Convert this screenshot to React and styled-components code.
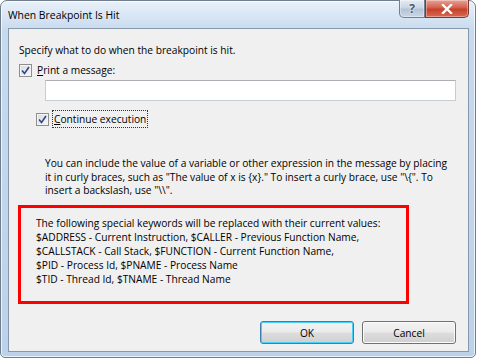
import React from 'react';
import styled, { createGlobalStyle } from 'styled-components';

const GlobalStyle = createGlobalStyle`
  body {
    margin: 0;
    background: #ffffff;
    font-family: "Open Sans", "Noto Sans", sans-serif;
  }
`;

const uiFont = `"Open Sans", "Noto Sans", sans-serif`;

const Window = styled.div`
  position: relative;
  width: 476px;
  height: 358px;
  box-sizing: border-box;
  border: 1px solid #6f7d8c;
  border-radius: 7px 7px 5px 5px;
  background: linear-gradient(180deg, #e9f1fa 0px, #c7daee 30px, #bcd2ea 100%);
  padding: 0 6px 5px 7px;
  display: flex;
  flex-direction: column;
  box-shadow: inset 0 0 0 1px rgba(255, 255, 255, 0.7);
`;

const TitleBar = styled.div`
  height: 27px;
  display: flex;
  align-items: flex-start;
`;

const Title = styled.div`
  font-family: ${uiFont};
  font-size: 10.4px;
  color: #000;
  margin-top: 7px;
`;

const CaptionButtons = styled.div`
  margin-left: auto;
  margin-top: -1px;
  display: flex;
`;

const CaptionButton = styled.div`
  width: ${p => p.$w}px;
  height: 18px;
  box-sizing: border-box;
  border: 1px solid ${p => (p.$close ? '#7a3a33' : '#71808f')};
  border-top: none;
  border-radius: ${p => (p.$close ? '0 0 5px 0' : '0 0 0 5px')};
  background: ${p =>
    p.$close
      ? 'linear-gradient(180deg, #e8a396 0%, #d4604e 45%, #c7402c 55%, #d86a4f 100%)'
      : 'linear-gradient(180deg, #e4ecf4 0%, #c9d6e4 45%, #b4c4d6 55%, #c8d8e8 100%)'};
  display: flex;
  align-items: center;
  justify-content: center;
  font-family: ${uiFont};
  font-weight: bold;
  box-shadow: inset 0 0 0 1px rgba(255, 255, 255, 0.35);
`;

const HelpMark = styled.span`
  color: #4d5a68;
  font-size: 12px;
  text-shadow: 0 0 2px #fff;
`;

const Client = styled.div`
  flex: 1;
  border: 1px solid #8798ab;
  background: #f0f0f0;
  padding: 14px 12px 0 10px;
  display: flex;
  flex-direction: column;
  font-family: ${uiFont};
  font-size: 10.2px;
  color: #000;
  line-height: 14px;
  white-space: nowrap;
`;

const Text = styled.div`
  margin-left: ${p => p.$indent || 0}px;
`;

const CheckRow = styled.label`
  display: flex;
  align-items: center;
  margin-top: ${p => p.$top}px;
  margin-left: ${p => p.$indent || 0}px;
  gap: 3px;
`;

const Box = styled.span`
  width: 13px;
  height: 13px;
  box-sizing: border-box;
  border: 1px solid #8e8f8f;
  background: linear-gradient(135deg, #dcdcdc 0%, #f6f6f6 100%);
  display: flex;
  align-items: center;
  justify-content: center;
  box-shadow: inset 0 0 0 1px #f4f4f4;
`;

const Label = styled.span`
  padding: 1px 1px;
  border: 1px dotted ${p => (p.$focus ? '#333' : 'transparent')};
  u {
    text-decoration: underline;
  }
`;

const Input = styled.div`
  height: 21px;
  box-sizing: border-box;
  margin: 1px 0 0 26px;
  border: 1px solid #c6cdd5;
  border-top-color: #abadb3;
  background: #fff;
`;

const Help = styled.div`
  margin: 29px 0 0 26px;
  line-height: 13.5px;
`;

const Highlight = styled.div`
  margin: 7px 0 0 -1px;
  width: 391px;
  height: 99px;
  box-sizing: border-box;
  border: 3px solid #ff0000;
  padding: 8px 0 0 15px;
`;

const Footer = styled.div`
  margin-top: auto;
  margin-bottom: 7px;
  display: flex;
  justify-content: flex-end;
  gap: 8px;
`;

const Button = styled.div`
  width: 94px;
  height: 23px;
  box-sizing: border-box;
  border: 1px solid ${p => (p.$default ? '#3c7fb1' : '#707070')};
  border-radius: 3px;
  background: linear-gradient(180deg, #f2f2f2 0%, #ebebeb 48%, #dddddd 52%, #cfcfcf 100%);
  box-shadow: inset 0 0 0 1px ${p => (p.$default ? '#48d0f8' : '#fbfbfb')};
  display: flex;
  align-items: center;
  justify-content: center;
  color: #000;
`;

function Check() {
  return (
    <Box>
      <svg width="9" height="9" viewBox="0 0 9 9">
        <path d="M1 4.5 L3.5 7.5 L8 1" fill="none" stroke="#2a4a8a" strokeWidth="1.6" />
      </svg>
    </Box>
  );
}

export default function App() {
  return (
    <>
      <GlobalStyle />
      <Window>
        <TitleBar>
          <Title>When Breakpoint Is Hit</Title>
          <CaptionButtons>
            <CaptionButton $w={26}>
              <HelpMark>?</HelpMark>
            </CaptionButton>
            <CaptionButton $w={44} $close>
              <svg width="12" height="10" viewBox="0 0 12 10">
                <path d="M2 1 L10 9 M10 1 L2 9" stroke="#fff" strokeWidth="2.4" strokeLinecap="square" />
              </svg>
            </CaptionButton>
          </CaptionButtons>
        </TitleBar>
        <Client>
          <Text>Specify what to do when the breakpoint is hit.</Text>
          <CheckRow $top={4}>
            <Check />
            <Label>
              <u>P</u>rint a message:
            </Label>
          </CheckRow>
          <Input />
          <CheckRow $top={9} $indent={17}>
            <Check />
            <Label $focus>
              <u>C</u>ontinue execution
            </Label>
          </CheckRow>
          <Help>
            You can include the value of a variable or other expression in the message by placing
            <br />
            it in curly braces, such as "The value of x is {'{x}'}." To insert a curly brace, use "\{'{'}". To
            <br />
            insert a backslash, use "\\".
          </Help>
          <Highlight>
            The following special keywords will be replaced with their current values:
            <br />
            $ADDRESS - Current Instruction, $CALLER - Previous Function Name,
            <br />
            $CALLSTACK - Call Stack, $FUNCTION - Current Function Name,
            <br />
            $PID - Process Id, $PNAME - Process Name
            <br />
            $TID - Thread Id, $TNAME - Thread Name
          </Highlight>
          <Footer>
            <Button $default>OK</Button>
            <Button>Cancel</Button>
          </Footer>
        </Client>
      </Window>
    </>
  );
}
